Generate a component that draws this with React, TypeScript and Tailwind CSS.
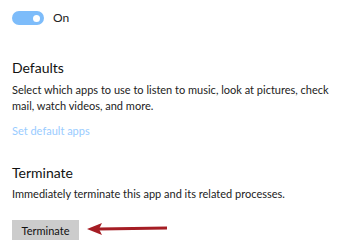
export default function App() {
  return (
    <div className="w-[360px] h-[240px] overflow-hidden bg-white pl-3 text-[#000] font-['Lato',sans-serif]">
      {/* Toggle */}
      <div className="flex items-center h-[14px] mt-[11px]">
        <div className="w-[32px] h-[14px] rounded-full bg-[#7dbcfa] flex items-center justify-end pr-[4px]">
          <div className="w-[7px] h-[7px] rounded-full bg-white" />
        </div>
        <span className="ml-[9px] text-[12px] leading-none text-[#222]">On</span>
      </div>

      {/* Defaults */}
      <h2 className="mt-[33px] text-[14px] leading-[20px] text-[#111]">Defaults</h2>
      <p className="mt-[4px] text-[11px] leading-[16px] text-[#222] w-[330px]">
        Select which apps to use to listen to music, look at pictures, check mail, watch videos, and more.
      </p>
      <div className="mt-[9px] text-[11px] leading-[16px] text-[#99ccff]">Set default apps</div>

      {/* Terminate */}
      <h2 className="mt-[24px] text-[14px] leading-[20px] text-[#111]">Terminate</h2>
      <p className="mt-[3px] text-[11px] leading-[16px] text-[#222]">
        Immediately terminate this app and its related processes.
      </p>
      <div className="mt-[18px] flex items-start">
        <button className="w-[67px] h-[26px] bg-[#cccccc] text-[11px] text-[#111] pb-[4px]">Terminate</button>
        <svg width="84" height="14" viewBox="0 0 84 14" className="ml-[6px] mt-[2px]">
          <path d="M14 5.5 L82 4.5 L82 7.5 L14 8.5 Z" fill="#a51d24" />
          <path d="M2 7 L17 1 L14 7 L17 13 Z" fill="#a51d24" />
        </svg>
      </div>
    </div>
  );
}
